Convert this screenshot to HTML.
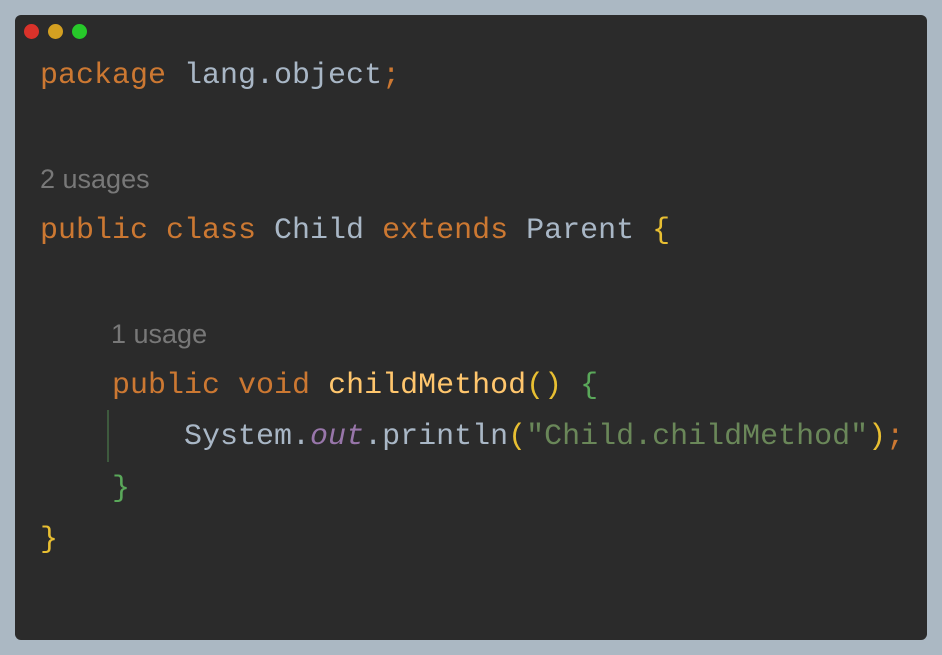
<!DOCTYPE html>
<html><head><style>
body{margin:0;width:942px;height:655px;background:#abb8c3;position:relative;overflow:hidden}
.card{position:absolute;left:15px;top:15px;width:912px;height:625px;background:#2b2b2b;border-radius:6px}
.dot{position:absolute;top:24px;width:15px;height:15px;border-radius:50%}
.l{position:absolute;left:40px;font-family:"Liberation Mono",monospace;font-size:30px;white-space:pre;color:#a9b7c6;line-height:1}
.u{position:absolute;font-family:"Liberation Sans",sans-serif;font-size:27px;color:#787878;line-height:1}
.k{color:#cc7832}.f{color:#ffc66d}.s{color:#6a8759}.p{color:#9876aa;font-style:italic}.y{color:#e8bf32}.g{color:#5aa85a}
</style></head><body>
<div class="card"></div>
<div class="dot" style="left:24px;background:#d9322a"></div>
<div class="dot" style="left:48px;background:#d4a021"></div>
<div class="dot" style="left:72px;background:#27c92a"></div>
<div class="l" style="top:61px"><span class="k">package</span> lang.object<span class="k">;</span></div>
<div class="u" style="left:40px;top:166px">2 usages</div>
<div class="l" style="top:216px"><span class="k">public class</span> Child <span class="k">extends</span> Parent <span class="y">{</span></div>
<div class="u" style="left:111px;top:321px">1 usage</div>
<div class="l" style="top:371px">    <span class="k">public void</span> <span class="f">childMethod</span><span class="y">()</span> <span class="g">{</span></div>
<div style="position:absolute;left:107px;top:410px;width:2px;height:52px;background:#3e5a3e"></div>
<div class="l" style="top:422px">        System.<span class="p">out</span>.println<span class="y">(</span><span class="s">"Child.childMethod"</span><span class="y">)</span><span class="k">;</span></div>
<div class="l" style="top:474px">    <span class="g">}</span></div>
<div class="l" style="top:525px"><span class="y">}</span></div>
</body></html>
